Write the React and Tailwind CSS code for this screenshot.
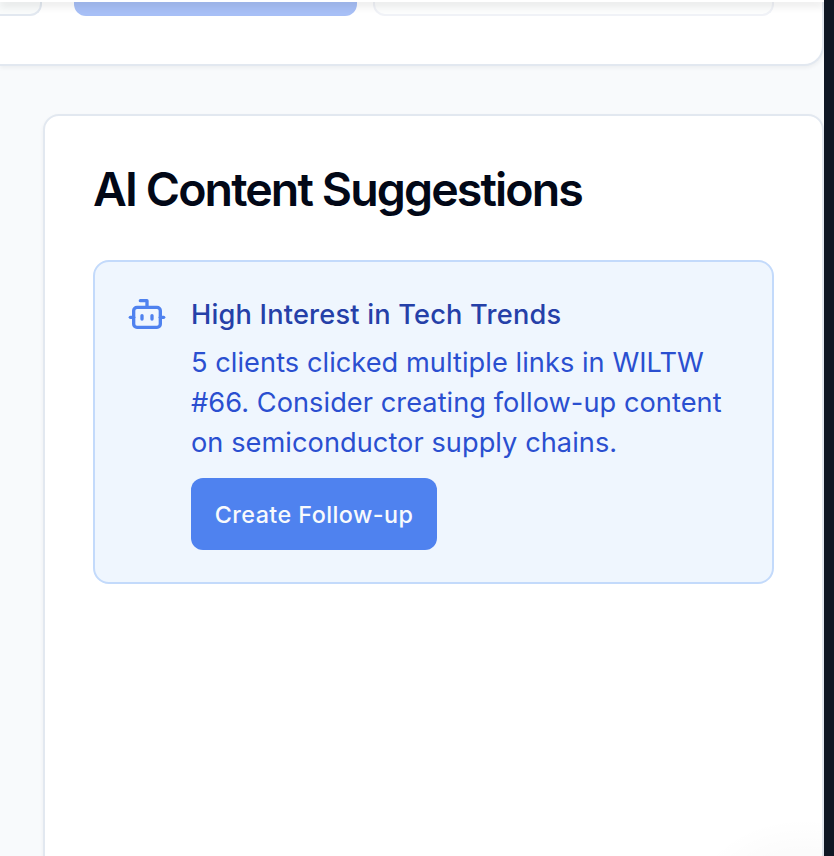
import { Bot } from "lucide-react";

function TopCard() {
  return (
    <section className="flex h-[66px] w-[824px] shrink-0 items-start rounded-br-[20px] border-r-2 border-b-2 border-[#e2e8f0] bg-white shadow-[0_2px_4px_rgba(0,0,0,0.05)]">
      <div className="h-4 w-[42px] shrink-0 rounded-br-[12px] border-r-2 border-b-2 border-[#e2e8f0] bg-[#f9fbfb]" />
      <div className="ml-8 h-4 w-[283px] shrink-0 rounded-b-[12px] bg-[#a7bff6]" />
      <div className="ml-4 h-4 w-[401px] shrink-0 rounded-b-[12px] border-x-2 border-b-2 border-[#f0f2f7] bg-[#fcfdfd]" />
    </section>
  );
}

function Suggestion() {
  return (
    <div className="mt-12 flex h-[324px] items-start gap-6 rounded-[16px] border-2 border-[#c3dafb] bg-[#eff6fe] p-8">
      <Bot className="size-10 shrink-0 text-[#4f82ef]" strokeWidth={2} />
      <div className="min-w-0 pt-px">
        <h3 className="text-[27.2px] leading-10 font-medium tracking-[0.2px] whitespace-nowrap text-[#2540a8]">
          High Interest in Tech Trends
        </h3>
        <p className="mt-2 text-[27.2px] leading-10 tracking-[0.05px] whitespace-nowrap text-[#2a4fd0]">
          5 clients clicked multiple links in WILTW
          <br />
          #66. Consider creating follow-up content
          <br />
          on semiconductor supply chains.
        </p>
        <button className="mt-[15px] flex h-[72px] w-[246px] items-center justify-center rounded-[12px] bg-[#4f82ef] pt-0.5 text-[23.3px] font-medium tracking-[0.45px] whitespace-nowrap text-[#f8fafc]">
          Create Follow-up
        </button>
      </div>
    </div>
  );
}

export default function App() {
  return (
    <div className="relative flex h-[856px] w-[834px] overflow-hidden bg-[#f8fafc] font-['Inter',sans-serif]">
      <main className="flex w-[824px] shrink-0 flex-col">
        <TopCard />
        <section className="mt-12 ml-[43px] h-[790px] w-[781px] shrink-0 rounded-t-[16px] border-2 border-[#e2e8f0] bg-white p-12 shadow-[0_2px_4px_rgba(0,0,0,0.05)]">
          <h2 className="h-12 pt-px text-[46.5px] leading-[48px] font-semibold tracking-[-1.88px] whitespace-nowrap text-[#020817]">
            AI Content Suggestions
          </h2>
          <Suggestion />
        </section>
      </main>
      <aside className="z-10 w-[10px] shrink-0 bg-[#0f1724]" />
      <div className="absolute top-0 left-0 h-[2px] w-[824px] bg-white shadow-[0_2px_8px_rgba(0,0,0,0.3)]" />
      <div className="absolute top-[818px] left-[694px] h-[160px] w-[220px] rounded-full bg-[radial-gradient(closest-side,rgba(0,0,0,0.03),rgba(0,0,0,0.015)_60%,transparent)]" />
    </div>
  );
}
